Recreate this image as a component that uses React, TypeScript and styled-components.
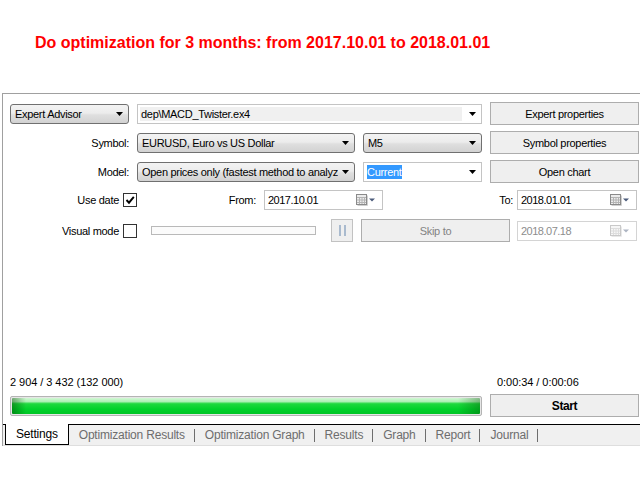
import React from "react";
import styled, { createGlobalStyle } from "styled-components";

const GlobalStyle = createGlobalStyle`
  html, body {
    margin: 0;
    padding: 0;
    background: #fff;
  }
  body {
    font-family: "Liberation Sans", Arial, sans-serif;
    font-size: 11px;
    color: #000;
  }
`;

const Page = styled.div`
  width: 640px;
  height: 480px;
  overflow: hidden;
`;

const Header = styled.div`
  height: 93px;
  box-sizing: border-box;
  padding: 34px 0 0 35px;
`;

const Title = styled.h1`
  margin: 0;
  font-size: 16px;
  line-height: 18px;
  font-weight: bold;
  color: #ff0000;
`;

const Panel = styled.div`
  margin-left: 2px;
  height: 353px;
  box-sizing: border-box;
  border-top: 1px solid #a0a0a0;
  border-left: 1px solid #a0a0a0;
  display: flex;
  flex-direction: column;
`;

const Form = styled.div`
  padding: 8px 0 0 7px;
  display: flex;
  flex-direction: column;
  letter-spacing: -0.3px;
`;

const Grid = styled.div`
  display: grid;
  grid-template-columns: 119px 218px 119px 149px;
  grid-auto-rows: 23px;
  column-gap: 8px;
  row-gap: 6px;
  align-items: center;
`;

const Label = styled.span`
  text-align: right;
  white-space: nowrap;
`;

const Select = styled.div`
  height: 20px;
  box-sizing: border-box;
  border: 1px solid #707070;
  border-radius: 3px;
  background: linear-gradient(#f3f3f3, #ececec 45%, #dfdfdf 55%, #d2d2d2);
  display: flex;
  align-items: center;
  gap: 4px;
  padding: 0 5px 0 4px;
  overflow: hidden;
`;

const SelectText = styled.span`
  flex: 1;
  min-width: 0;
  white-space: nowrap;
  overflow: hidden;
`;

const Combo = styled.div<{ $span?: boolean }>`
  grid-column: ${(p) => (p.$span ? "span 2" : "auto")};
  height: 20px;
  box-sizing: border-box;
  border: 1px solid #c4c4c4;
  background: #fff;
  display: flex;
  align-items: center;
  gap: 7px;
  padding: 2px 5px 2px 2px;
`;

const ComboField = styled.div<{ $readonly?: boolean }>`
  flex: 1;
  height: 100%;
  display: flex;
  align-items: center;
  padding-left: 1px;
  background: ${(p) => (p.$readonly ? "#f0f0f0" : "transparent")};
  white-space: nowrap;
  overflow: hidden;
`;

const Selected = styled.span`
  background: #3399ff;
  color: #fff;
  line-height: 14px;
`;

const Button = styled.button<{ $bold?: boolean; $w?: number }>`
  width: ${(p) => (p.$w ? `${p.$w}px` : "auto")};
  height: 23px;
  box-sizing: border-box;
  margin: 0;
  padding: 0;
  border: 1px solid #adadad;
  background: #efefef;
  font-family: "Liberation Sans", Arial, sans-serif;
  font-size: ${(p) => (p.$bold ? "12px" : "11px")};
  font-weight: ${(p) => (p.$bold ? "bold" : "normal")};
  letter-spacing: ${(p) => (p.$bold ? "-0.4px" : "-0.3px")};
  color: #000;
  &:disabled {
    color: #838383;
  }
`;

const Row = styled.div<{ $h: number; $top: number }>`
  display: flex;
  align-items: center;
  height: ${(p) => p.$h}px;
  margin-top: ${(p) => p.$top}px;
`;

const CheckGroup = styled.label`
  width: 127px;
  display: flex;
  justify-content: flex-end;
  align-items: center;
  gap: 4px;
`;

const CheckBox = styled.span`
  width: 14px;
  height: 14px;
  box-sizing: border-box;
  border: 1px solid #333;
  background: #fff;
  display: flex;
  align-items: center;
  justify-content: center;
`;

const FieldLabel = styled.span<{ $w: number; $pr: number }>`
  width: ${(p) => p.$w}px;
  box-sizing: border-box;
  padding-right: ${(p) => p.$pr}px;
  text-align: right;
`;

const DateField = styled.div<{ $w: number; $disabled?: boolean }>`
  width: ${(p) => p.$w}px;
  height: 20px;
  box-sizing: border-box;
  margin-left: ${(p) => (p.$disabled ? 7 : 0)}px;
  border: 1px solid ${(p) => (p.$disabled ? "#d4d4d4" : "#c4c4c4")};
  background: #fff;
  display: flex;
  align-items: center;
  padding: 0 6px 0 3px;
  color: ${(p) => (p.$disabled ? "#8d8d8d" : "#000")};
  letter-spacing: -0.5px;
`;

const DateText = styled.span`
  flex: 1;
`;

const Track = styled.div`
  width: 165px;
  height: 9px;
  box-sizing: border-box;
  margin-left: 14px;
  border: 1px solid #b9b9b9;
  background: #fbfbfb;
`;

const PauseButton = styled.button`
  width: 22px;
  height: 23px;
  box-sizing: border-box;
  margin: 0 8px 0 15px;
  padding: 0;
  border: 1px solid #c2c2c2;
  background: #efefef;
  display: flex;
  align-items: center;
  justify-content: center;
  gap: 3px;
`;

const PauseBar = styled.span`
  width: 2px;
  height: 11px;
  background: #a9bace;
`;

const Spacer = styled.div`
  flex: 1;
`;

const Stats = styled.div`
  display: grid;
  grid-template-columns: 487px auto;
  height: 14px;
  line-height: 14px;
  padding-left: 7px;
  margin-bottom: 5px;
  letter-spacing: -0.05px;
`;

const ProgressRow = styled.div`
  display: flex;
  align-items: center;
  gap: 8px;
  height: 23px;
  padding-left: 7px;
  margin-bottom: 7px;
`;

const Progress = styled.div`
  width: 472px;
  height: 20px;
  box-sizing: border-box;
  border: 1px solid #b4b4b4;
  border-radius: 2px;
  padding: 1px;
  background: #e6e6e6;
`;

const ProgressFill = styled.div`
  height: 100%;
  border-radius: 1px;
  background:
    linear-gradient(to right, rgba(0, 70, 0, 0.45) 0, rgba(0, 70, 0, 0) 14px, rgba(0, 70, 0, 0) calc(100% - 22px), rgba(0, 70, 0, 0.35) 100%),
    linear-gradient(#d2f7d4 0, #aef0b5 22%, #1fd83e 36%, #00d22a 70%, #00c526 100%);
`;

const TabStrip = styled.div`
  height: 22px;
  box-sizing: border-box;
  border-top: 1px solid #000;
  border-bottom: 1px solid #dedede;
  background: #f0f0f0;
  display: flex;
  padding-left: 2px;
  font-size: 12px;
  letter-spacing: -0.2px;
`;

const ActiveTab = styled.div`
  margin-top: -1px;
  height: 21px;
  box-sizing: border-box;
  padding: 0 10px 0 10px;
  border: 1px solid #000;
  border-top: none;
  background: #fff;
  display: flex;
  align-items: center;
  color: #000;
`;

const Tab = styled.div`
  padding: 0 9px 0 10px;
  display: flex;
  align-items: center;
  color: #6d6d6d;
`;

const TabSep = styled.span`
  align-self: center;
  width: 1px;
  height: 13px;
  background: #6d6d6d;
`;

const DropArrow = () => (
  <svg width="7" height="4" viewBox="0 0 7 4">
    <polygon points="0,0 7,0 3.5,4" fill="#000" />
  </svg>
);

const CalendarIcon = ({ disabled }: { disabled?: boolean }) => (
  <svg width="20" height="12" viewBox="0 0 20 12" opacity={disabled ? 0.45 : 1}>
    <rect x="0.5" y="0.5" width="10" height="10" fill="#ececec" stroke="#8a8a8a" />
    <path d="M1 3.5h9M1 6h9M1 8.5h9M3.5 3v7M6 3v7M8.5 3v7" stroke="#b4b4b4" strokeWidth="1" />
    <path d="M1.5 11.5h10V1.5" stroke="#d0d0d0" fill="none" />
    <polygon points="13,4.5 19,4.5 16,7.5" fill="#4a5b7a" />
  </svg>
);

const Tick = () => (
  <svg width="12" height="12" viewBox="0 0 12 12">
    <path d="M2.5 6 L5 8.7 L9.8 2.8" stroke="#000" strokeWidth="1.9" fill="none" />
  </svg>
);

const tabs = ["Optimization Results", "Optimization Graph", "Results", "Graph", "Report", "Journal"];

export default function App() {
  return (
    <Page>
      <GlobalStyle />
      <Header>
        <Title>Do optimization for 3 months: from 2017.10.01 to 2018.01.01</Title>
      </Header>
      <Panel>
        <Form>
          <Grid>
            <Select>
              <SelectText>Expert Advisor</SelectText>
              <DropArrow />
            </Select>
            <Combo $span>
              <ComboField $readonly>dep\MACD_Twister.ex4</ComboField>
              <DropArrow />
            </Combo>
            <Button>Expert properties</Button>

            <Label>Symbol:</Label>
            <Select>
              <SelectText>EURUSD, Euro vs US Dollar</SelectText>
              <DropArrow />
            </Select>
            <Select>
              <SelectText>M5</SelectText>
              <DropArrow />
            </Select>
            <Button>Symbol properties</Button>

            <Label>Model:</Label>
            <Select>
              <SelectText>Open prices only (fastest method to analyze the bars just completed)</SelectText>
              <DropArrow />
            </Select>
            <Combo>
              <ComboField>
                <Selected>Current</Selected>
              </ComboField>
              <DropArrow />
            </Combo>
            <Button>Open chart</Button>
          </Grid>

          <Row $h={22} $top={6}>
            <CheckGroup>
              Use date
              <CheckBox>
                <Tick />
              </CheckBox>
            </CheckGroup>
            <FieldLabel $w={127} $pr={8}>From:</FieldLabel>
            <DateField $w={119}>
              <DateText>2017.10.01</DateText>
              <CalendarIcon />
            </DateField>
            <FieldLabel $w={134} $pr={4}>To:</FieldLabel>
            <DateField $w={120}>
              <DateText>2018.01.01</DateText>
              <CalendarIcon />
            </DateField>
          </Row>

          <Row $h={23} $top={8}>
            <CheckGroup>
              Visual mode
              <CheckBox />
            </CheckGroup>
            <Track />
            <PauseButton disabled>
              <PauseBar />
              <PauseBar />
            </PauseButton>
            <Button $w={149} disabled>
              Skip to
            </Button>
            <DateField $w={120} $disabled>
              <DateText>2018.07.18</DateText>
              <CalendarIcon disabled />
            </DateField>
          </Row>
        </Form>

        <Spacer />

        <Stats>
          <span>2 904 / 3 432 (132 000)</span>
          <span>0:00:34 / 0:00:06</span>
        </Stats>
        <ProgressRow>
          <Progress>
            <ProgressFill />
          </Progress>
          <Button $w={149} $bold>
            Start
          </Button>
        </ProgressRow>

        <TabStrip>
          <ActiveTab>Settings</ActiveTab>
          {tabs.map((t) => (
            <React.Fragment key={t}>
              <Tab>{t}</Tab>
              <TabSep />
            </React.Fragment>
          ))}
        </TabStrip>
      </Panel>
    </Page>
  );
}
